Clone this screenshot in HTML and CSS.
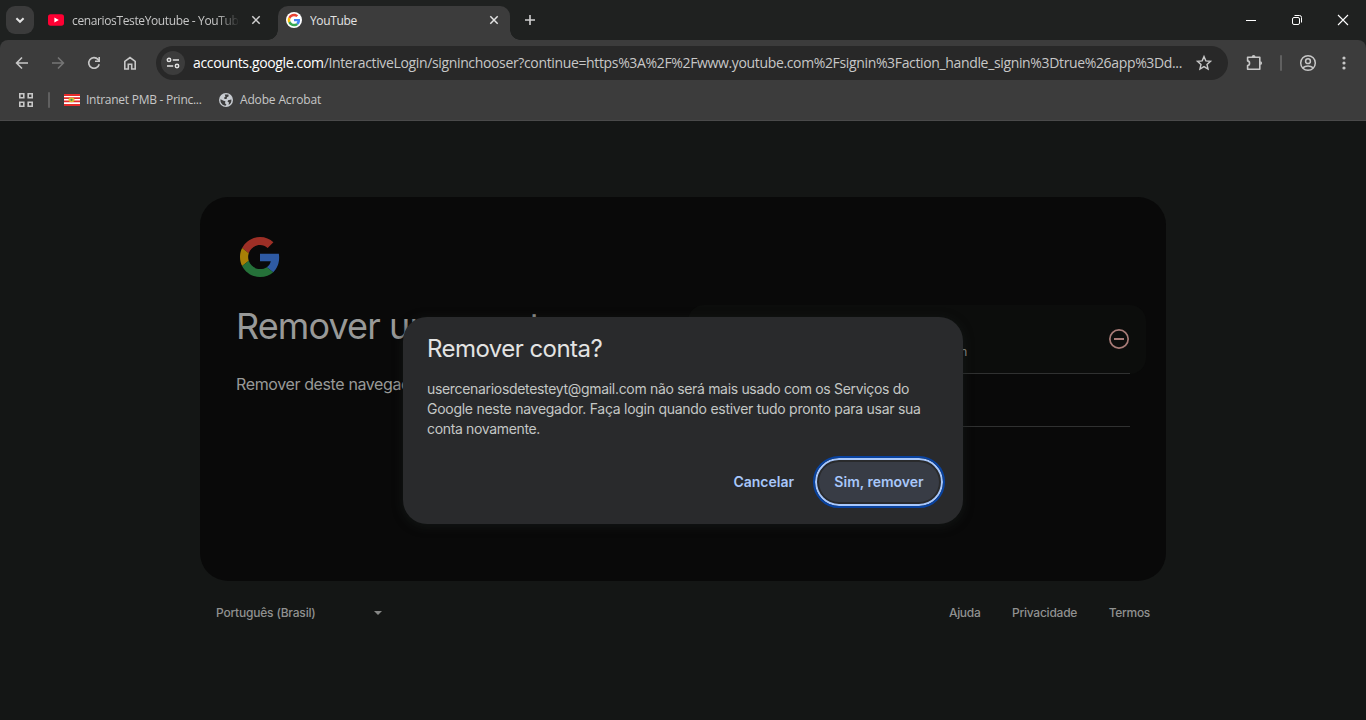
FILE: index.html
```
<!DOCTYPE html>
<html lang="pt-BR">
<head>
<meta charset="utf-8">
<title>YouTube</title>
<link rel="stylesheet" href="styles.css">
</head>
<body>
<div class="window">
  <header class="tabstrip">
    <button class="tab-search" aria-label="Pesquisar guias"><svg width="28" height="28" viewBox="0 0 28 28"><path d="M10.4 12.2 14 15.8l3.6-3.6" fill="none" stroke="#e3e3e3" stroke-width="2"/></svg></button>
    <div class="tab">
      <svg class="favicon" width="16" height="16" viewBox="0 0 16 16"><rect y="2.3" width="16" height="11.4" rx="2.6" fill="#ff0033"/><path d="M6.4 5.5v5L10.8 8z" fill="#fff"/></svg>
      <span class="tab-title faded"><span class="t t-tab">cenariosTesteYoutube - YouTube</span></span>
      <svg class="tab-close" width="16" height="16" viewBox="0 0 16 16"><path d="m4.3 4.3 7.4 7.4m0-7.4-7.4 7.4" stroke="#d0d0d0" stroke-width="1.5"/></svg>
    </div>
    <div class="tab active">
      <svg class="favicon" width="16" height="16" viewBox="0 0 48 48"><circle cx="24" cy="24" r="24" fill="#fff"/><g transform="translate(5 5) scale(.79)"><use href="#g-logo"/></g></svg>
      <span class="tab-title"><span class="t t-tab">YouTube</span></span>
      <svg class="tab-close" width="16" height="16" viewBox="0 0 16 16"><path d="m4.3 4.3 7.4 7.4m0-7.4-7.4 7.4" stroke="#e3e3e3" stroke-width="1.5"/></svg>
    </div>
    <button class="new-tab" aria-label="Nova guia"><svg width="16" height="16" viewBox="0 0 16 16"><path d="M8 3v10M3 8h10" stroke="#d0d0d0" stroke-width="1.6"/></svg></button>
    <div class="controls">
      <svg width="46" height="40" viewBox="0 0 46 40"><path d="M18 20.5h10" stroke="#fff"/></svg>
      <svg width="46" height="40" viewBox="0 0 46 40"><g fill="none" stroke="#fff"><rect x="18.5" y="17.500" width="7" height="7" rx="1.5"/><path d="M20.500 15.5h5a2 2 0 0 1 2 2v5"/></g></svg>
      <svg width="46" height="40" viewBox="0 0 46 40"><path d="m18 15 10 10m0-10L18 25" stroke="#fff" stroke-width="1.1"/></svg>
    </div>
  </header>

  <div class="chrome">
    <nav class="toolbar">
      <span class="tool"><svg width="20" height="20" viewBox="0 0 20 20"><path d="M16 10H5M10 4.500 4.600 10l5.400 5.500" fill="none" stroke="#c7c7c7" stroke-width="1.6"/></svg></span>
      <span class="tool"><svg width="20" height="20" viewBox="0 0 20 20"><path d="M4 10h11M10 4.500l5.400 5.500-5.400 5.500" fill="none" stroke="#757575" stroke-width="1.6"/></svg></span>
      <span class="tool"><svg width="20" height="20" viewBox="0 0 20 20"><path d="M15.200 11.200A5.300 5.300 0 1 1 14 6.400l1.300 1.500" fill="none" stroke="#c7c7c7" stroke-width="1.6"/><path d="M16 4v5h-5V7.500h3.400V4z" fill="#c7c7c7"/></svg></span>
      <span class="tool"><svg width="20" height="20" viewBox="0 0 20 20"><path d="M4.800 16V8.400L10 4.500l5.200 3.900V16h-3.500v-4.700H8.300V16z" fill="none" stroke="#c7c7c7" stroke-width="1.6"/></svg></span>
      <div class="omnibox">
        <span class="site-info"><svg width="16" height="16" viewBox="0 0 16 16"><g fill="none" stroke="#e3e3e3" stroke-width="1.5"><circle cx="4" cy="4.900" r="1.700"/><path d="M7.800 4.900H14M2 11h6.200"/><circle cx="12" cy="11" r="1.700"/></g></svg></span>
        <span class="url"><span class="t t-url"><b>accounts.google.com</b>/InteractiveLogin/signinchooser?continue=https%3A%2F%2Fwww.youtube.com%2Fsignin%3Faction_handle_signin%3Dtrue%26app%3Dd...</span></span>
        <svg class="star" width="20" height="20" viewBox="0 0 20 20"><path d="m10 3.600 1.850 4.300 4.650.400-3.500 3.100 1.050 4.600L10 13.600 5.950 16 7 11.400 3.500 8.300l4.650-.400z" fill="none" stroke="#c7c7c7" stroke-width="1.4"/></svg>
      </div>
      <span class="tool"><svg width="20" height="20" viewBox="0 0 20 20"><path d="M3.600 4.300h12.200v11.900H3.600v-3.700c2.600-.3 2.600-4.300 0-4.600z" fill="none" stroke="#c7c7c7" stroke-width="1.600" stroke-linejoin="round"/><path d="M7.700 4a1.900 1.900 0 0 1 3.800 0zM16.200 8.200a1.900 1.900 0 0 1 0 3.800z" fill="#c7c7c7"/></svg></span>
      <i class="divider tool-divider"></i>
      <span class="tool"><svg width="20" height="20" viewBox="0 0 20 20"><g fill="none" stroke="#c7c7c7" stroke-width="1.500"><circle cx="10" cy="10" r="7.300"/><circle cx="10" cy="8.200" r="2.400"/><path d="M4.700 14.800c3-2.500 7.600-2.500 10.600 0"/></g></svg></span>
      <span class="tool"><svg width="20" height="20" viewBox="0 0 20 20"><g fill="#c7c7c7"><circle cx="10" cy="5" r="1.600"/><circle cx="10" cy="10" r="1.600"/><circle cx="10" cy="15" r="1.600"/></g></svg></span>
    </nav>
    <nav class="bookmarks">
      <svg width="14" height="14" viewBox="0 0 14 14"><path d="M.8.800h4v4h-4zM9.200.800h4v4h-4zM.8 9.200h4v4h-4zM9.200 9.200h4v4h-4z" fill="none" stroke="#c7c7c7" stroke-width="1.600"/></svg>
      <i class="divider bm-divider"></i>
      <svg class="flag" width="16" height="12" viewBox="0 0 16 12"><path fill="#fff" d="M0 0h16v12H0z"/><path fill="#e52b2b" d="M0 0h16v2H0zM0 3.300h16v1.700H0zM0 6.600h16v1.700H0zM0 10h16v2H0z"/><ellipse cx="7.500" cy="5.800" rx="3" ry="2.400" fill="#d9c02c"/><circle cx="7.500" cy="5.800" r="1.100" fill="#4a7a5c"/></svg>
      <span class="bm-label"><span class="t">Intranet PMB - Princ...</span></span>
      <svg class="globe" width="14" height="14" viewBox="0 0 14 14"><circle cx="7" cy="7" r="7" fill="#c7cbd0"/><path d="M1.500 6.300 4.600 7.800 6.400 8.200 6 10.200l1.500 1.500-1 1C3.300 12.400 1 9.700 1.500 6.300zM5.800 1.600l3.600-.1.300 1.700L8 4.200 7.600 6H5.600L5 4.700l1.400-1zM9 7.200l3.400-.6c.3 2.600-1 4.600-2.800 5.400L10 9.600 8.600 8.700z" fill="#3c3c3c"/></svg>
      <span class="bm-label"><span class="t t-bm2">Adobe Acrobat</span></span>
    </nav>
  </div>

  <main class="page">
    <section class="card">
      <div class="intro">
        <svg class="logo" width="40" height="40" viewBox="0 0 48 48"><g id="g-logo"><path fill="#EA4335" d="M24 9.500c3.540 0 6.710 1.220 9.210 3.600l6.850-6.850C35.900 2.380 30.470 0 24 0 14.620 0 6.510 5.380 2.560 13.220l7.980 6.190C12.430 13.720 17.740 9.500 24 9.500z"/><path fill="#4285F4" d="M46.980 24.550c0-1.570-.15-3.090-.38-4.550H24v9.020h12.940c-.58 2.960-2.260 5.480-4.780 7.180l7.730 6c4.510-4.180 7.090-10.360 7.090-17.650z"/><path fill="#FBBC05" d="M10.530 28.590c-.48-1.450-.76-2.990-.76-4.590s.27-3.140.76-4.590l-7.980-6.190C.92 16.460 0 20.120 0 24c0 3.880.92 7.540 2.560 10.780z"/><path fill="#34A853" d="M24 48c6.480 0 11.930-2.130 15.890-5.810l-7.730-6c-2.150 1.450-4.920 2.300-8.160 2.300-6.260 0-11.570-4.220-13.470-9.910l-7.980 6.190C6.510 42.620 14.620 48 24 48z"/></g></svg>
        <h1><span class="t">Remover uma conta</span></h1>
        <p><span class="t">Remover deste navegador</span></p>
      </div>
      <div class="accounts">
        <div class="account hovered">
          <span class="t email">usercenariosdetesteyt@gmail.com</span>
          <svg width="24" height="24" viewBox="0 0 24 24"><g fill="none" stroke="#a77b77" stroke-width="1.700"><circle cx="12" cy="12" r="9.150"/><path d="M7 12h10" stroke-width="2"/></g></svg>
        </div>
        <div class="account empty"></div>
      </div>
    </section>
    <footer class="footer">
      <div class="language"><span class="t">Português (Brasil)</span><i class="caret"></i></div>
      <nav class="links"><a class="t">Ajuda</a><a class="t t-privacy">Privacidade</a><a class="t">Termos</a></nav>
    </footer>
    <div class="dialog" role="dialog">
      <h2><span class="t">Remover conta?</span></h2>
      <p><span class="t t-first">usercenariosdetesteyt@gmail.com não será mais usado com os Serviços do</span><br><span class="t">Google neste navegador. Faça login quando estiver tudo pronto para usar sua</span><br><span class="t t-last">conta novamente.</span></p>
      <div class="actions"><button class="cancel"><span class="t">Cancelar</span></button><button class="confirm"><span class="t">Sim, remover</span></button></div>
    </div>
  </main>
</div>
</body>
</html>
```
FILE: styles.css
```
* { box-sizing: border-box; }
body { margin: 0; background: #141615; font-family: Inter, "Liberation Sans", sans-serif; }
button { border: 0; padding: 0; background: none; font: inherit; color: inherit; }
svg { flex: none; display: block; }
h1, h2, p { margin: 0; }
.t { white-space: nowrap; }
.window { display: flex; flex-direction: column; width: 1366px; height: 720px; overflow: hidden; background: #1f2120; }

.tabstrip, .chrome { font-family: "Open Sans", "Noto Sans", sans-serif; }
.tabstrip { display: flex; align-items: flex-start; height: 40px; padding-left: 6px; background: #1f2120; }
.tab-search { width: 28px; height: 28px; margin-top: 6px; border-radius: 9px; background: #3b3b3b; }
.tab { display: flex; align-items: center; gap: 8px; height: 34px; margin-top: 6px; padding: 0 14px 6px 14px; width: 244px; color: #c7c7c7; font-size: 12px; }
.tab-title { flex: 1; min-width: 0; padding-top: 1px; overflow: hidden; white-space: nowrap; line-height: 19px; }
.t-tab { letter-spacing: -0.37px; }
.faded { -webkit-mask-image: linear-gradient(90deg, #000 86%, transparent); mask-image: linear-gradient(90deg, #000 86%, transparent); }
.tab.active { position: relative; width: 232px; padding: 0 8px 6px; border-radius: 10px 10px 0 0; background: #3c3c3c; color: #e3e3e3; }
.tab.active::before, .tab.active::after { content: ""; position: absolute; bottom: 0; width: 10px; height: 10px; }
.tab.active::before { left: -10px; background: radial-gradient(circle at 0 0, transparent 9.5px, #3c3c3c 10px); }
.tab.active::after { right: -10px; background: radial-gradient(circle at 100% 0, transparent 9.5px, #3c3c3c 10px); }
.new-tab { display: grid; place-items: center; width: 28px; height: 28px; margin: 6px 0 0 6px; }
.controls { display: flex; margin-left: auto; }

.chrome { height: 81px; background: #3c3c3c; border-bottom: 1px solid #4a4a4a; border-radius: 8px 8px 0 0; }
.toolbar { display: flex; align-items: center; height: 46px; padding: 0 4px; }
.tool { display: grid; place-items: center; width: 36px; height: 36px; }
.omnibox { display: flex; align-items: center; width: 1072px; height: 34px; margin: 0 8px; padding: 0 14px 0 5px; border-radius: 17px; background: #282828; }
.site-info { display: grid; flex: none; place-items: center; width: 24px; height: 24px; border-radius: 50%; background: #3c3c3c; }
.url { flex: 1; min-width: 0; margin-left: 8px; color: #c7c7c7; font-size: 14px; line-height: 20px; letter-spacing: -0.352px; }
.url b { font-weight: 400; color: #fff; }
.divider { width: 2px; height: 16px; border-radius: 1px; background: #606060; }
.tool-divider { margin: 0 8px; }
.bookmarks { display: flex; align-items: center; height: 28px; padding-left: 19px; color: #c7c7c7; font-size: 12px; letter-spacing: -0.26px; }
.bm-divider { margin: 0 14px 0 15px; }
.bm-label { width: 133px; margin-left: 6px; line-height: 18px; }
.globe + .bm-label { margin-left: 7px; }
.t-bm2 { letter-spacing: -0.16px; }

.page { position: relative; flex: 1; background: #141615; padding: 76px 200px 0; }
.card { display: flex; height: 384px; border-radius: 28px; background: #090909; }
.intro { width: 447px; padding: 40px 0 0 36px; color: #989998; }
.logo { margin-left: 4px; opacity: .66; }
h1 { margin-top: 27px; font-size: 36px; font-weight: 400; line-height: 44px; letter-spacing: -0.9px; }
.intro p { margin-top: 24px; font-size: 16px; line-height: 24px; letter-spacing: -0.38px; }
.accounts { width: 519px; padding: 108px 20px 0 41px; }
.account { position: relative; height: 69px; }
.account::after { content: ""; position: absolute; right: 16px; left: 16px; bottom: 0; height: 1px; background: #303131; }
.hovered { display: flex; align-items: flex-start; justify-content: flex-end; gap: 140px; padding: 22px 15px 0 0; border-radius: 16px; background: #0c0d0c; }
.email { padding-top: 17px; font-size: 12px; line-height: 16px; letter-spacing: -0.2px; color: #989998; }
.empty { height: 53px; }
.footer { display: flex; justify-content: space-between; align-items: center; height: 62px; padding: 0 16px; font-size: 12px; font-weight: 500; letter-spacing: -0.2px; color: #909190; }
.language { display: flex; align-items: center; justify-content: space-between; width: 166px; }
.caret { margin-top: 2px; border: 4px solid transparent; border-top-color: #868786; border-bottom: 0; }
.links { display: flex; gap: 31.5px; letter-spacing: -0.3px; }
.t-privacy { letter-spacing: -0.23px; }

.dialog { position: absolute; left: 403px; top: 196px; width: 560px; height: 207px; padding: 16px 20px 18px 24px; border-radius: 24px; background: #292a2c; box-shadow: 0 2px 10px 1px rgba(24, 28, 26, .6); }
h2 { font-size: 24px; font-weight: 400; line-height: 32px; letter-spacing: -0.55px; color: #e3e3e3; }
.dialog p { margin-top: 14px; font-size: 14px; line-height: 20px; letter-spacing: -0.27px; color: #c4c7c5; }
.dialog .t-first { letter-spacing: -0.32px; }
.dialog .t-last { letter-spacing: -0.34px; }
.actions { display: flex; align-items: center; justify-content: flex-end; height: 48px; margin-top: 19px; font-size: 14px; font-weight: 600; color: #a8c7fa; }
.actions .t { display: block; padding-bottom: 1px; }
.cancel { margin-right: 21px; }
.confirm { width: 128px; height: 48px; border: 2px solid #a8c7fa; border-radius: 24px; outline: 2px solid #0842a0; background: #383c45; box-shadow: inset 0 0 0 2px #292a2c; }
```
